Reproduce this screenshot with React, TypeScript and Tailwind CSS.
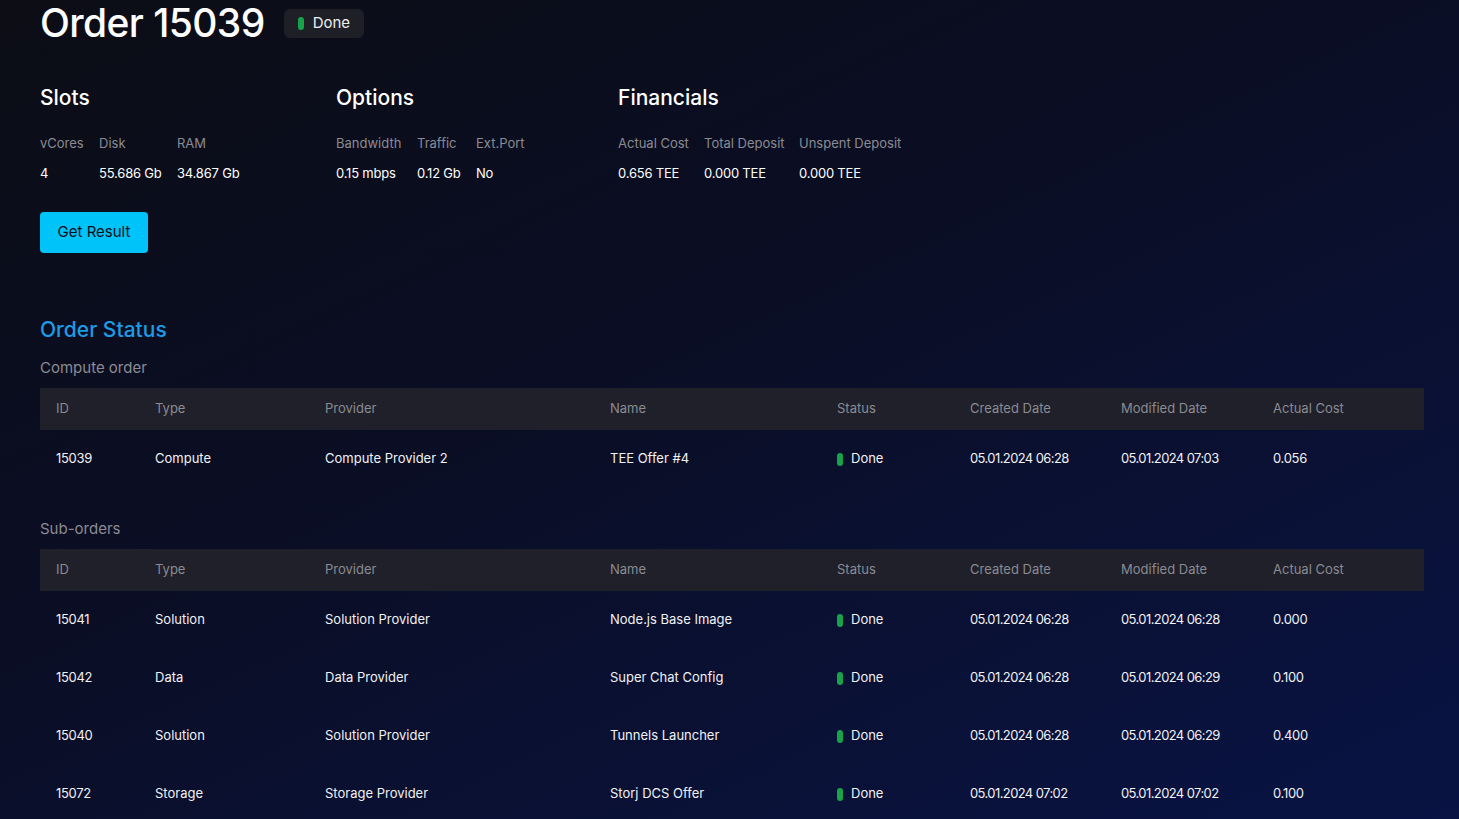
import React from 'react';

const FONT = { fontFamily: 'Inter, "Noto Sans", sans-serif' };

interface Row {
  id: string;
  type: string;
  provider: string;
  name: string;
  created: string;
  modified: string;
  cost: string;
}

const COMPUTE: Row[] = [
  { id: '15039', type: 'Compute', provider: 'Compute Provider 2', name: 'TEE Offer #4', created: '05.01.2024 06:28', modified: '05.01.2024 07:03', cost: '0.056' },
];

const SUBORDERS: Row[] = [
  { id: '15041', type: 'Solution', provider: 'Solution Provider', name: 'Node.js Base Image', created: '05.01.2024 06:28', modified: '05.01.2024 06:28', cost: '0.000' },
  { id: '15042', type: 'Data', provider: 'Data Provider', name: 'Super Chat Config', created: '05.01.2024 06:28', modified: '05.01.2024 06:29', cost: '0.100' },
  { id: '15040', type: 'Solution', provider: 'Solution Provider', name: 'Tunnels Launcher', created: '05.01.2024 06:28', modified: '05.01.2024 06:29', cost: '0.400' },
  { id: '15072', type: 'Storage', provider: 'Storage Provider', name: 'Storj DCS Offer', created: '05.01.2024 07:02', modified: '05.01.2024 07:02', cost: '0.100' },
];

const HEADERS = ['ID', 'Type', 'Provider', 'Name', 'Status', 'Created Date', 'Modified Date', 'Actual Cost'];
const COLS = 'grid grid-cols-[99px_170px_285px_227px_133px_151px_152px_1fr]';

function StatusDot() {
  return <span className="inline-block w-[6px] h-[13px] rounded-full bg-[#18a34a]" />;
}

function Section({ title, cols, items }: { title: string; cols: string; items: [string, string][] }) {
  return (
    <div>
      <h2 className="text-[21px] leading-none text-white font-medium">{title}</h2>
      <div className={`grid ${cols} mt-[29px]`}>
        {items.map(([label, value]) => (
          <div key={label} className="flex flex-col">
            <span className="text-[13px] leading-none text-[#8a8b93]">{label}</span>
            <span className="text-[13px] leading-none text-white mt-[17px] tracking-[-0.2px]">{value}</span>
          </div>
        ))}
      </div>
    </div>
  );
}

function OrderTable({ rows }: { rows: Row[] }) {
  return (
    <div>
      <div className={`${COLS} bg-[#1f2029] h-[42px] items-center px-4 text-[13px] text-[#8a8b93]`}>
        {HEADERS.map(h => <div key={h}>{h}</div>)}
      </div>
      {rows.map(r => (
        <div key={r.id} className={`${COLS} h-[58px] items-center px-4 text-[13px] text-[#f1f1f3]`}>
          <div className="tracking-[-0.3px]">{r.id}</div>
          <div>{r.type}</div>
          <div>{r.provider}</div>
          <div>{r.name}</div>
          <div className="flex items-center gap-[8px]"><StatusDot />Done</div>
          <div className="tracking-[-0.6px]">{r.created}</div>
          <div className="tracking-[-0.6px]">{r.modified}</div>
          <div className="tracking-[-0.3px]">{r.cost}</div>
        </div>
      ))}
    </div>
  );
}

export default function App() {
  return (
    <div
      className="min-h-screen bg-[linear-gradient(155deg,#0c0d15_0%,#0a0e26_45%,#091446_100%)] pl-10 pr-[35px] pb-10"
      style={FONT}
    >
      {/* header */}
      <div className="flex items-center gap-[19px] pt-[3px]">
        <h1 className="text-[39px] leading-[40px] text-white font-medium tracking-[-0.6px]">Order 15039</h1>
        <div className="flex items-center gap-[9px] bg-[#1e1f27] rounded-md h-[29px] px-[14px] text-[15px] text-[#eeeef0]">
          <StatusDot />
          Done
        </div>
      </div>

      {/* summary */}
      <div className="flex mt-[44px]">
        <div className="w-[296px]">
          <Section title="Slots" cols="grid-cols-[59px_78px_auto]" items={[['vCores', '4'], ['Disk', '55.686 Gb'], ['RAM', '34.867 Gb']]} />
        </div>
        <div className="w-[282px]">
          <Section title="Options" cols="grid-cols-[81px_59px_auto]" items={[['Bandwidth', '0.15 mbps'], ['Traffic', '0.12 Gb'], ['Ext.Port', 'No']]} />
        </div>
        <Section title="Financials" cols="grid-cols-[86px_95px_auto]" items={[['Actual Cost', '0.656 TEE'], ['Total Deposit', '0.000 TEE'], ['Unspent Deposit', '0.000 TEE']]} />
      </div>

      <button className="mt-[32px] w-[108px] h-[41px] rounded bg-[#00c3f9] text-[15px] text-[#0b0c14]">
        Get Result
      </button>

      {/* order status */}
      <h2 className="mt-[66px] text-[21px] leading-none text-[#1d9be6] font-medium">Order Status</h2>
      <div className="mt-[20px] text-[15px] leading-none text-[#8a8b93]">Compute order</div>
      <div className="mt-[13px]">
        <OrderTable rows={COMPUTE} />
      </div>

      <div className="mt-[33px] text-[15px] leading-none text-[#8a8b93]">Sub-orders</div>
      <div className="mt-[13px]">
        <OrderTable rows={SUBORDERS} />
      </div>
    </div>
  );
}
